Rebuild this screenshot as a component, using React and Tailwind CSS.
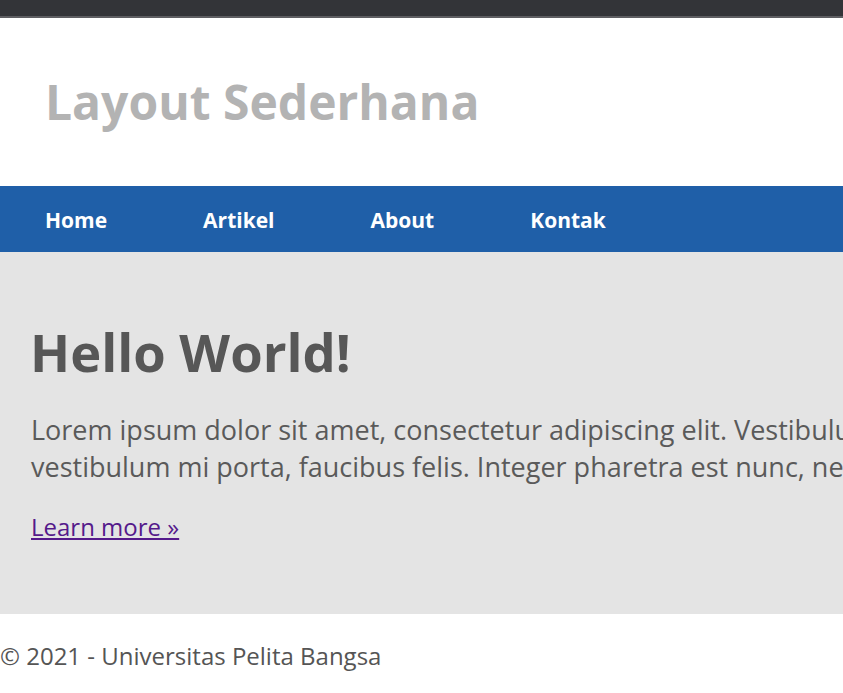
import React from 'react';

export default function App() {
  const links = ['Home', 'Artikel', 'About', 'Kontak'];

  return (
    <div className="w-full overflow-hidden bg-white font-['Open_Sans',sans-serif] text-[#555555]">
      {/* Top strip */}
      <div className="h-[18px] bg-[#333438] border-b-2 border-[#5e5e62]"></div>

      {/* Header */}
      <header className="h-[168px] flex items-center pl-[45px]">
        <h1 className="text-[48px] font-bold leading-[1.2] text-[#b3b3b3]">Layout Sederhana</h1>
      </header>

      {/* Nav */}
      <nav className="h-[66px] bg-[#1f5fa8] flex items-center pl-[45px] gap-[96px]">
        {links.map((l) => (
          <a key={l} href="#" className="text-white text-[21px] font-bold leading-none pt-[2px]">{l}</a>
        ))}
      </nav>

      {/* Main */}
      <main className="bg-[#e4e4e4] px-[31px] pt-[69px] pb-[69px]">
        <h2 className="text-[52.5px] font-bold leading-[62px] text-[#575757] -ml-[1px]">Hello World!</h2>
        <p className="mt-[28px] text-[27px] leading-[37px] text-[#5a5a5a] whitespace-nowrap">
          Lorem ipsum dolor sit amet, consectetur adipiscing elit. Vestibulum ac dolor sed
          <br />
          vestibulum mi porta, faucibus felis. Integer pharetra est nunc, nec cursus lorem tincidunt.
        </p>
        <a href="#" className="block mt-[24px] text-[24px] leading-[36px] text-[#551a8b] underline w-fit">Learn more »</a>
      </main>

      {/* Footer */}
      <footer className="h-[80px] pt-[24px]">
        <p className="text-[24px] leading-[36px] text-[#555555]">© 2021 - Universitas Pelita Bangsa</p>
      </footer>
    </div>
  );
}
